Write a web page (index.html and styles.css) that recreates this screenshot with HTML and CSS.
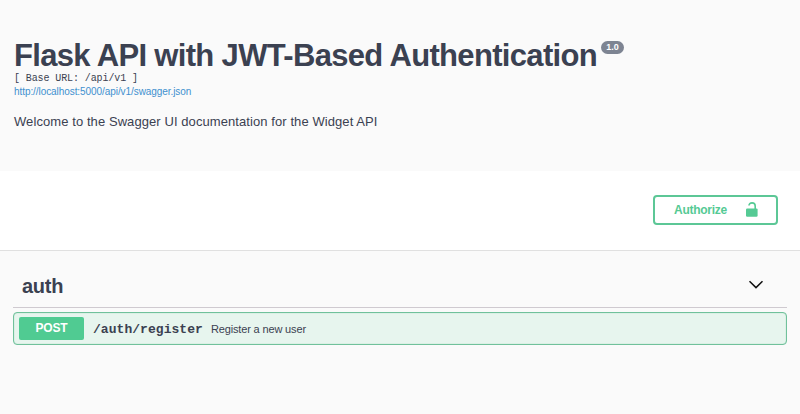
FILE: index.html
```html
<!DOCTYPE html>
<html lang="en">
<head>
<meta charset="utf-8">
<title>Flask API with JWT-Based Authentication</title>
<link rel="stylesheet" href="styles.css">
</head>
<body>
<header class="info">
  <h1 class="title"><span class="title-text">Flask API with JWT-Based Authentication</span><span class="version">1.0</span></h1>
  <pre class="base-url">[ Base URL: /api/v1 ]</pre>
  <a class="spec-link">http://localhost:5000/api/v1/swagger.json</a>
  <p class="description">Welcome to the Swagger UI documentation for the Widget API</p>
</header>
<section class="schemes">
  <button class="authorize"><span class="authorize-text">Authorize</span>
    <svg class="lock" viewBox="0 0 12 15"><path class="shackle" d="M3 3.6C3 1.8 4.2 .9 6 .9s3.2 1 3.2 3V7"/><rect y="6.4" width="11.6" height="8.4" rx="1.2"/></svg>
  </button>
</section>
<main class="operations">
  <h2 class="tag"><span class="tag-text">auth</span>
    <svg class="arrow" viewBox="0 0 16 10"><path d="M1.5 1.2L8 7.6l6.5-6.4"/></svg>
  </h2>
  <div class="operation">
    <span class="method">POST</span>
    <span class="path">/auth/register</span>
    <span class="summary">Register a new user</span>
  </div>
</main>
</body>
</html>
```
FILE: styles.css
```css
* { box-sizing: border-box; }
body { margin: 0; height: 414px; background: #fafafa; color: #3b4151; font-family: "Liberation Sans", Arial, sans-serif; overflow: hidden; }
.info { height: 171px; padding: 37px 14px 0; }
.title { display: flex; align-items: flex-start; height: 35px; margin: 0; font-size: 31px; line-height: 37px; white-space: nowrap; }
.title-text { letter-spacing: -0.67px; }
.version { margin: 4px 0 0 4px; width: 23px; height: 13px; border-radius: 7px; background: #7d8492; color: #fff; font-size: 9px; line-height: 13px; text-align: center; }
.base-url { margin: 0; height: 13px; font: 10px/13px "Liberation Mono", monospace; letter-spacing: -0.1px; }
.spec-link { display: block; height: 13px; color: #4190cf; font-size: 10px; line-height: 13px; letter-spacing: -0.07px; }
.description { margin: 16px 0 0; font-size: 13px; line-height: 16px; letter-spacing: 0.08px; }
.schemes { display: flex; justify-content: flex-end; height: 80px; padding: 24px 22px 0 0; background: #fff; border-bottom: 1px solid #e0e0e0; }
.authorize { display: flex; align-items: center; justify-content: space-between; width: 125px; height: 30px; padding: 0 18px 0 19px; background: transparent; border: 2px solid #5cc796; border-radius: 4px; color: #55ca94; font: bold 12px "Liberation Sans", Arial, sans-serif; }
.authorize-text { letter-spacing: -0.28px; }
.lock { width: 12px; height: 15px; margin-bottom: 1px; fill: #55ca94; }
.shackle { fill: none; stroke: #55ca94; stroke-width: 1.6; }
.operations { padding: 15px 13px 0; }
.tag { display: flex; align-items: center; justify-content: space-between; height: 42px; margin: 0 0 4px; padding: 0 23px 0 9px; border-bottom: 1px solid #cfcad0; font-size: 20px; }
.tag-text { letter-spacing: -0.25px; }
.arrow { width: 16px; height: 10px; margin-bottom: 4px; fill: none; stroke: #111; stroke-width: 1.5; }
.operation { display: flex; align-items: center; height: 33px; padding: 0 5px; border: 1px solid #70c19b; border-radius: 4px; background: #e7f5ee; box-shadow: inset 0 0 1px #70c19b; }
.method { width: 65px; height: 23px; border-radius: 2px; background: #50cb92; color: #fff; font-size: 12px; font-weight: bold; line-height: 23px; text-align: center; letter-spacing: -0.2px; }
.path { margin-left: 9px; padding-top: 1px; font: bold 13px "Liberation Mono", monospace; letter-spacing: 0.05px; }
.summary { margin-left: 8px; font-size: 11px; letter-spacing: -0.15px; }
```
